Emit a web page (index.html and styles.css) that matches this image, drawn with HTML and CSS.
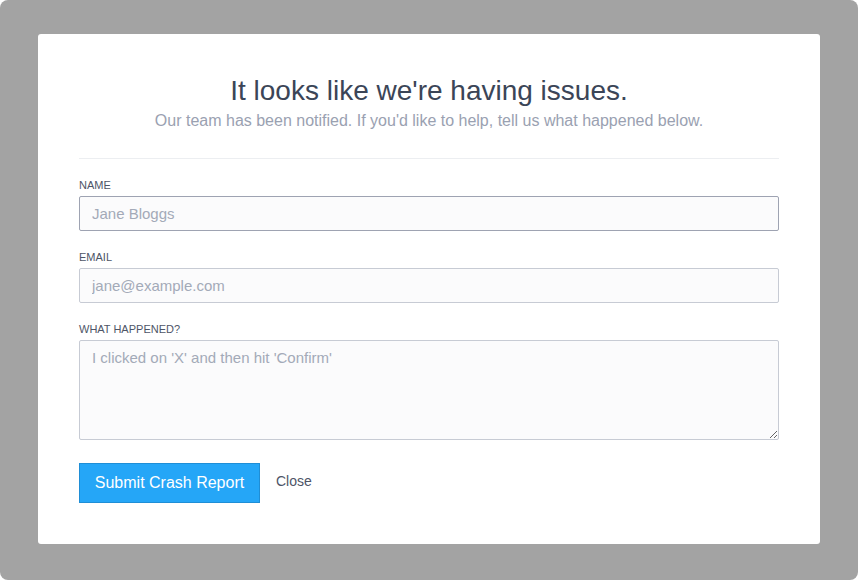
FILE: index.html
```html
<!DOCTYPE html>
<html>
<head>
<meta charset="utf-8">
<link rel="stylesheet" href="styles.css">
</head>
<body>
<div class="overlay">
  <div class="dialog">
    <div class="header">
      <h2 class="title">It looks like we're having issues.</h2>
      <p class="subtitle">Our team has been notified. If you'd like to help, tell us what happened below.</p>
    </div>
    <form class="form">
      <div class="field">
        <label class="label">Name</label>
        <input class="input focused" type="text" placeholder="Jane Bloggs" autofocus>
      </div>
      <div class="field">
        <label class="label">Email</label>
        <input class="input" type="text" placeholder="jane@example.com">
      </div>
      <div class="field">
        <label class="label">What happened?</label>
        <textarea class="input textarea" placeholder="I clicked on 'X' and then hit 'Confirm'"></textarea>
      </div>
      <div class="actions">
        <button type="button" class="submit">Submit Crash Report</button>
        <a class="close">Close</a>
      </div>
    </form>
  </div>
</div>
</body>
</html>
```
FILE: styles.css
```css
html { background: #ffffff; }
body {
  margin: 0;
  font-family: "Liberation Sans", Arial, sans-serif;
}
.overlay {
  width: 858px;
  height: 580px;
  background: #a3a3a3;
  border-radius: 8px;
  box-sizing: border-box;
  padding: 34px 38px;
}
.dialog {
  background: #ffffff;
  border-radius: 3px;
  height: 510px;
  box-sizing: border-box;
  padding: 41px 41px 0;
}
.header {
  text-align: center;
  border-bottom: 1px solid #eceef1;
  padding-bottom: 27px;
}
.title {
  margin: 0;
  font-weight: normal;
  font-size: 28px;
  line-height: 32px;
  color: #3b4557;
}
.subtitle {
  margin: 4px 0 0;
  font-size: 16px;
  line-height: 20px;
  color: #9aa1b1;
}
.form {
  padding-top: 19px;
}
.field {
  margin-bottom: 19px;
}
.label {
  display: block;
  font-size: 11px;
  line-height: 14px;
  text-transform: uppercase;
  color: #4e5567;
  margin-bottom: 4px;
}
.input {
  display: block;
  width: 100%;
  box-sizing: border-box;
  height: 35px;
  border: 1px solid #c7cbd4;
  border-radius: 2px;
  background: #fbfbfc;
  padding: 0 12px;
  font-family: "Liberation Sans", Arial, sans-serif;
  font-size: 15px;
  color: #3b4557;
  caret-color: #3b4557;
  outline: none;
}
.input.focused { border-color: #9ea3b2; }
.input::placeholder { color: #a3aab8; }
.textarea {
  height: 100px;
  padding: 8px 12px;
  resize: vertical;
}
.actions {
  display: flex;
  align-items: center;
  gap: 16px;
  margin-top: 23px;
}
.submit {
  width: 181px;
  height: 40px;
  background: #25a6f7;
  border: 1px solid #1f8ed6;
  border-radius: 0;
  color: #ffffff;
  font-family: "Liberation Sans", Arial, sans-serif;
  font-size: 16px;
  padding: 0;
}
.close {
  font-size: 14px;
  color: #4e5567;
  margin-top: -4px;
}
```
